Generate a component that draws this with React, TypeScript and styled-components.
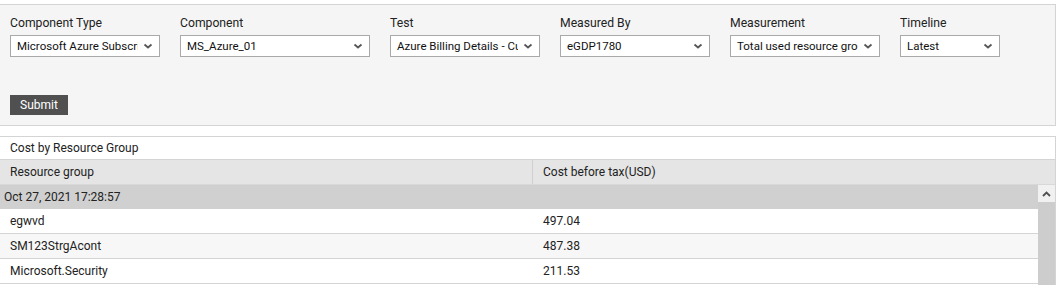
import styled, { createGlobalStyle } from 'styled-components';

const GlobalStyle = createGlobalStyle`
  html, body {
    margin: 0;
    padding: 0;
    background: #ffffff;
  }
  body {
    font-family: Roboto, "Liberation Sans", Arial, sans-serif;
    font-size: 12px;
    color: #222222;
  }
`;

const Page = styled.div`
  width: 1056px;
  padding-top: 4px;
  display: flex;
  flex-direction: column;
  gap: 10px;
`;

const FilterPanel = styled.div`
  height: 122px;
  background: #f5f5f5;
  border: 1px solid #d4d4d4;
  border-left: none;
  padding: 11px 10px 0 10px;
  box-sizing: border-box;
  display: flex;
  flex-direction: column;
`;

const FilterRow = styled.div`
  display: flex;
  gap: 20px;
`;

const Field = styled.div`
  display: flex;
  flex-direction: column;
  gap: 4px;
`;

const Label = styled.label`
  font-size: 12.2px;
  line-height: 15px;
  color: #222;
`;

const SelectBox = styled.div<{ $w: number }>`
  width: ${p => p.$w}px;
  height: 22px;
  box-sizing: border-box;
  border: 1px solid #a9a9a9;
  background: #ffffff;
  display: flex;
  align-items: center;
  padding: 0 6px 0 6px;
  gap: 5px;
`;

const SelectText = styled.span`
  flex: 1;
  overflow: hidden;
  white-space: nowrap;
  font-size: 11.5px;
  color: #111;
`;

const Chevron = styled.svg`
  flex: none;
  width: 10px;
  height: 10px;
`;

const SubmitButton = styled.button`
  margin-top: 38px;
  align-self: flex-start;
  width: 58px;
  height: 20px;
  border: none;
  background: #505050;
  color: #ffffff;
  font-family: inherit;
  font-size: 12px;
  padding: 0;
`;

const TablePanel = styled.div`
  border: 1px solid #d4d4d4;
  border-left: none;
  border-bottom: none;
  display: flex;
  flex-direction: column;
`;

const TableTitle = styled.div`
  height: 22px;
  line-height: 22px;
  padding-left: 10px;
  background: #ffffff;
  border-bottom: 1px solid #d4d4d4;
  font-size: 12px;
`;

const HeadRow = styled.div`
  display: grid;
  grid-template-columns: 532px 1fr;
  height: 24px;
  background: #e5e5e5;
  border-bottom: 1px solid #d8d8d8;
`;

const HeadCell = styled.div<{ $divider?: boolean }>`
  line-height: 24px;
  padding-left: 10px;
  border-left: ${p => (p.$divider ? '1px solid #d0d0d0' : 'none')};
  font-size: 12px;
`;

const BodyWrap = styled.div`
  display: flex;
  height: 100px;
  overflow: hidden;
`;

const Rows = styled.div`
  flex: 1;
  display: flex;
  flex-direction: column;
`;

const GroupRow = styled.div`
  height: 24px;
  line-height: 24px;
  padding-left: 4px;
  background: #d0d0d0;
  font-size: 12px;
`;

const DataRow = styled.div<{ $alt?: boolean }>`
  display: grid;
  grid-template-columns: 533px 1fr;
  height: 24px;
  line-height: 24px;
  background: ${p => (p.$alt ? '#f7f7f7' : '#ffffff')};
  border-bottom: 1px solid #d4d4d4;
  flex: none;
`;

const DataCell = styled.div`
  padding-left: 10px;
  font-size: 12px;
`;

const ScrollBar = styled.div`
  width: 17px;
  background: #cdcdcd;
  display: flex;
  flex-direction: column;
`;

const ScrollButton = styled.div`
  height: 17px;
  background: #f1f1f1;
  display: flex;
  align-items: center;
  justify-content: center;
`;

const filters = [
  { label: 'Component Type', value: 'Microsoft Azure Subscription', w: 150 },
  { label: 'Component', value: 'MS_Azure_01', w: 190 },
  { label: 'Test', value: 'Azure Billing Details - Cumulative', w: 150 },
  { label: 'Measured By', value: 'eGDP1780', w: 150 },
  { label: 'Measurement', value: 'Total used resource groups cost', w: 150 },
  { label: 'Timeline', value: 'Latest', w: 100 },
];

const rows = [
  { group: 'egwvd', cost: '497.04' },
  { group: 'SM123StrgAcont', cost: '487.38' },
  { group: 'Microsoft.Security', cost: '211.53' },
];

const ChevronDown = () => (
  <Chevron viewBox="0 0 10 10">
    <path d="M1.5 3.5 L5 6.5 L8.5 3.5" fill="none" stroke="#555" strokeWidth="1.8" />
  </Chevron>
);

const App = () => {
  return (
    <>
      <GlobalStyle />
      <Page>
        <FilterPanel>
          <FilterRow>
            {filters.map(f => (
              <Field key={f.label}>
                <Label>{f.label}</Label>
                <SelectBox $w={f.w}>
                  <SelectText>{f.value}</SelectText>
                  <ChevronDown />
                </SelectBox>
              </Field>
            ))}
          </FilterRow>
          <SubmitButton>Submit</SubmitButton>
        </FilterPanel>
        <TablePanel>
          <TableTitle>Cost by Resource Group</TableTitle>
          <HeadRow>
            <HeadCell>Resource group</HeadCell>
            <HeadCell $divider>Cost before tax(USD)</HeadCell>
          </HeadRow>
          <BodyWrap>
            <Rows>
              <GroupRow>Oct 27, 2021 17:28:57</GroupRow>
              {rows.map((r, i) => (
                <DataRow key={r.group} $alt={i % 2 === 1}>
                  <DataCell>{r.group}</DataCell>
                  <DataCell>{r.cost}</DataCell>
                </DataRow>
              ))}
            </Rows>
            <ScrollBar>
              <ScrollButton>
                <svg width="9" height="6" viewBox="0 0 9 6">
                  <path d="M1 5 L4.5 1.5 L8 5" fill="none" stroke="#505050" strokeWidth="1.8" />
                </svg>
              </ScrollButton>
            </ScrollBar>
          </BodyWrap>
        </TablePanel>
      </Page>
    </>
  );
};

export default App;
